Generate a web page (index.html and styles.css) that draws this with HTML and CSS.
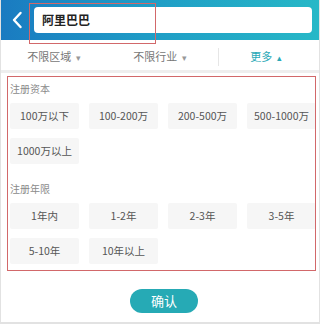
FILE: index.html
```html
<!DOCTYPE html>
<html lang="zh">
<head>
    <meta charset="UTF-8">
    <meta name="viewport" content="width=device-width, initial-scale=1.0">
    <title>筛选</title>
    <link rel="stylesheet" href="styles.css">
</head>
<body>
    <div class="page">
        <div class="header">
            <div class="back">
                <svg width="12" height="18" viewBox="0 0 12 18"><path d="M9.5 2 L3 9 L9.5 16" fill="none" stroke="#fff" stroke-width="2.4" stroke-linecap="round" stroke-linejoin="round"/></svg>
            </div>
            <div class="search">阿里巴巴</div>
        </div>
        <div class="filters">
            <div class="filter">不限区域 <span class="caret">▾</span></div>
            <div class="filter">不限行业 <span class="caret">▾</span></div>
            <div class="divider"></div>
            <div class="filter more">更多 <span class="caret">▴</span></div>
        </div>
        <div class="panel">
            <div class="label">注册资本</div>
            <div class="options">
                <div class="option">100万以下</div>
                <div class="option">100-200万</div>
                <div class="option">200-500万</div>
                <div class="option">500-1000万</div>
                <div class="option">1000万以上</div>
            </div>
            <div class="label second">注册年限</div>
            <div class="options">
                <div class="option">1年内</div>
                <div class="option">1-2年</div>
                <div class="option">2-3年</div>
                <div class="option">3-5年</div>
                <div class="option">5-10年</div>
                <div class="option">10年以上</div>
            </div>
        </div>
        <div class="footer">
            <button class="confirm">确认</button>
        </div>
        <div class="mark mark-search"></div>
        <div class="mark mark-panel"></div>
    </div>
</body>
</html>
```

FILE: styles.css
```css
*{
    margin: 0;
    padding: 0;
    box-sizing: border-box;
    font-family: "Noto Sans CJK SC", "Noto Sans", sans-serif;
}

body{
    background-color: #fff;
}

.page{
    position: relative;
    width: 320px;
    height: 324px;
    border-left: 1px solid #e2e2e2;
    border-right: 1px solid #e2e2e2;
    border-bottom: 2px solid #e2e2e2;
    overflow: hidden;
}

.header{
    display: flex;
    align-items: center;
    height: 40px;
    padding: 0 7px 0 10px;
    background: linear-gradient(90deg, #1a7bc1 0%, #1f9cc6 45%, #27b8c7 100%);
}

.back{
    width: 17px;
    display: flex;
    align-items: center;
}

.search{
    flex: 1;
    height: 26px;
    margin-left: 6px;
    padding-left: 8px;
    background-color: #fff;
    border-radius: 4px;
    font-size: 12px;
    font-weight: 700;
    line-height: 26px;
    color: #222;
}

.filters{
    display: flex;
    height: 33px;
    padding-top: 4px;
    border-bottom: 3px solid #eeeeee;
    align-items: center;
}

.filter{
    flex: 1;
    text-align: center;
    font-size: 11px;
    color: #777;
    line-height: 18px;
}

.divider{
    width: 1px;
    height: 18px;
    margin-left: 5px;
    margin-right: -6px;
    background-color: #e6e6e6;
}

.caret{
    font-size: 9px;
    color: #999;
    margin-left: 2px;
}

.more{
    color: #2aa9b7;
}

.more .caret{
    color: #2aa9b7;
}

.panel{
    padding: 9px 0 0 9px;
}

.label{
    font-size: 10px;
    line-height: 14px;
    color: #8a8a8a;
    margin-bottom: 7px;
}

.second{
    margin-top: 18px;
}

.options{
    display: grid;
    grid-template-columns: repeat(4, 69px);
    column-gap: 10px;
    row-gap: 9px;
}

.option{
    height: 26px;
    line-height: 26px;
    text-align: center;
    font-size: 10.5px;
    color: #555;
    background-color: #f6f6f6;
    border-radius: 2px;
    white-space: nowrap;
}

.footer{
    display: flex;
    justify-content: center;
    padding: 25px 0 0 8px;
}

.confirm{
    width: 68px;
    height: 24px;
    border: none;
    border-radius: 12px;
    background-color: #26aab5;
    color: #fff;
    font-size: 13px;
    line-height: 24px;
}

.mark{
    position: absolute;
    border: 1px solid #d2686a;
}

.mark-search{
    left: 28px;
    top: 3px;
    width: 127px;
    height: 41px;
}

.mark-panel{
    left: 6px;
    top: 76px;
    width: 309px;
    height: 195px;
}
```
